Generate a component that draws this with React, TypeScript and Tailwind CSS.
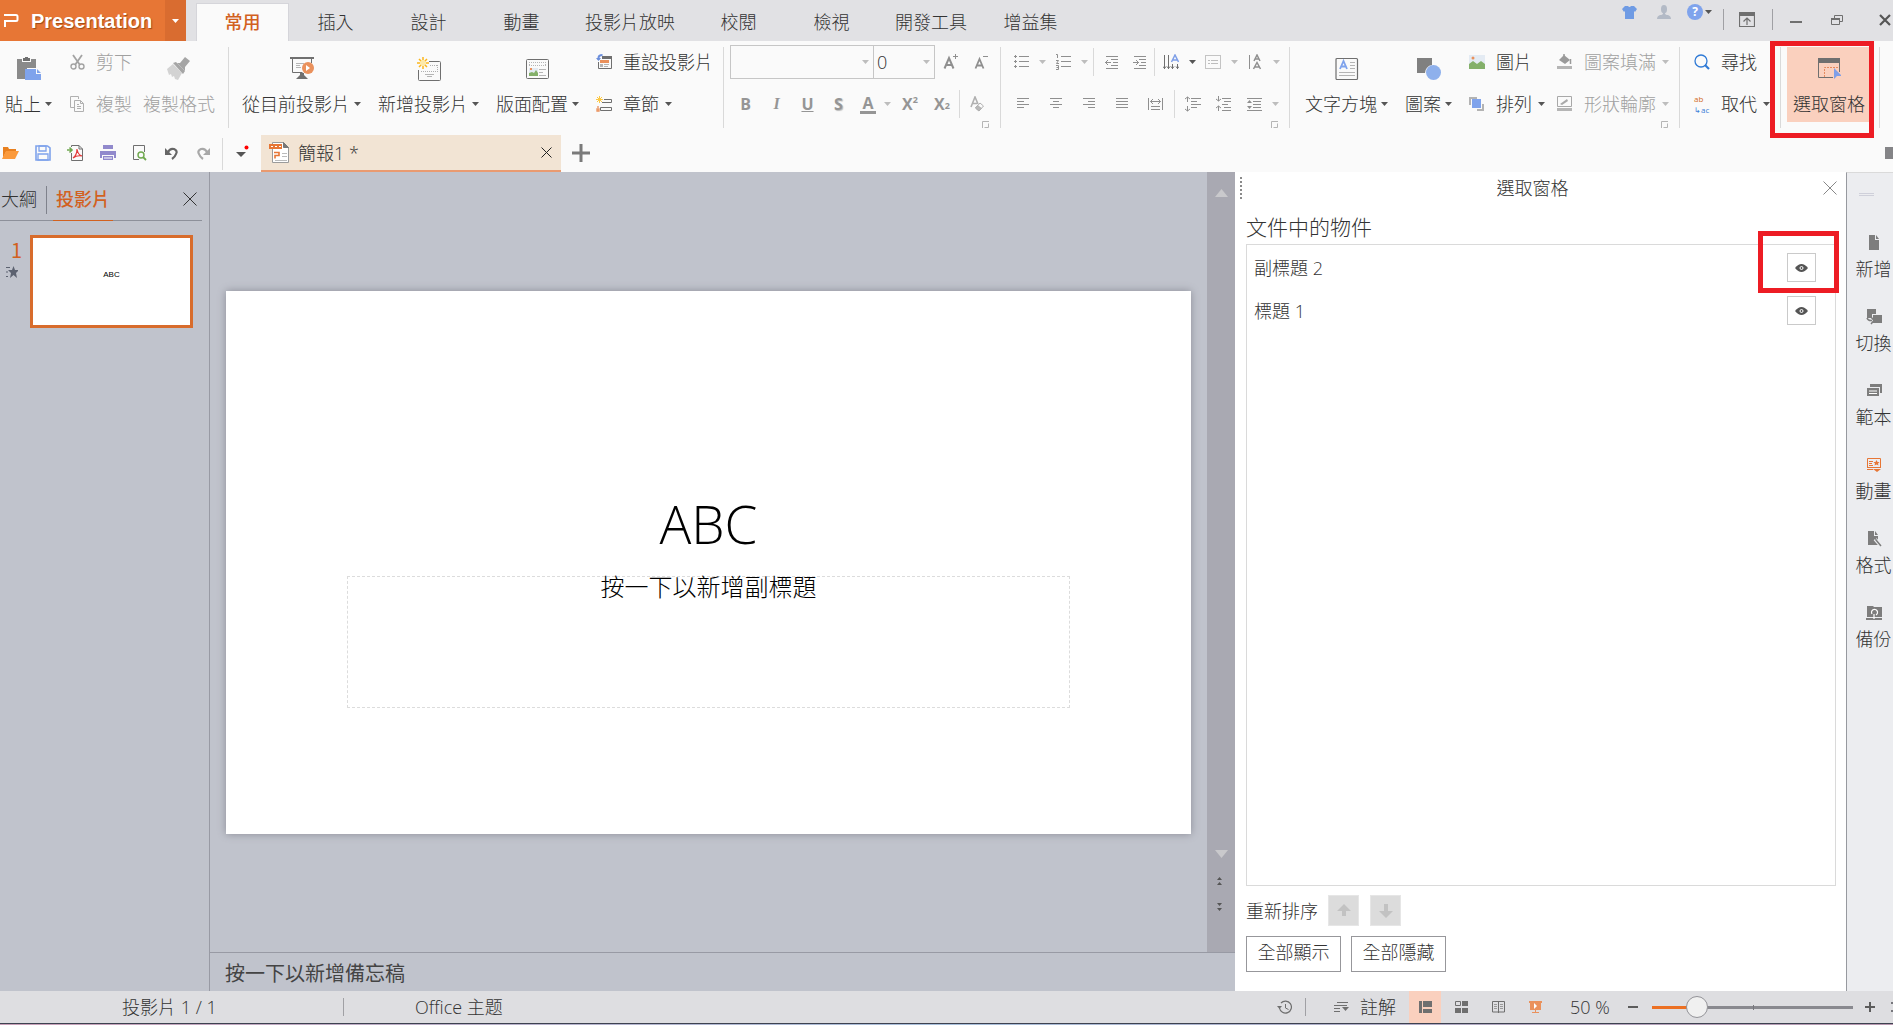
import React from 'react';
import clsx from 'clsx';

interface IconProps {
  w?: number;
  h?: number;
  color?: string;
  className?: string;
  children: React.ReactNode;
}

// Base drawing surface, one unit per pixel
const Icon = ({ w = 16, h = 16, color = '#6f6f6f', className, children }: IconProps) => (
  <svg
    width={w}
    height={h}
    viewBox={`0 0 ${w} ${h}`}
    fill="none"
    stroke={color}
    className={clsx('shrink-0', className)}
    aria-hidden="true"
  >
    {children}
  </svg>
);

const Caret = ({ color = '#555', className }: { color?: string; className?: string }) => (
  <Icon w={7} h={4} className={className}>
    <path d="M0 0h7L3.500 4z" fill={color} stroke="none" />
  </Icon>
);

const LIGHT = '#bdbdbd';
const GREY = '#8f8f8f';

const Divider = ({ className }: { className?: string }) => (
  <span className={clsx('h-7 w-px shrink-0 bg-[#d9d9d9]', className)} />
);

const Launcher = () => (
  <button aria-label="更多選項" className="absolute right-[11px] bottom-0">
    <Icon w={7} h={7} color="#b5b5b5">
      <path d="M.5 7V.5H7M6.500 2.500v4h-4" />
    </Icon>
  </button>
);

/* ---------- ribbon pieces ---------- */

interface RibbonButtonProps {
  icon: React.ReactNode;
  label: string;
  caret?: boolean;
  disabled?: boolean;
}

const BigButton = ({ icon, label, caret, disabled }: RibbonButtonProps) => (
  <button
    className={clsx(
      'flex shrink-0 flex-col items-center gap-2 pt-[10px] whitespace-nowrap',
      disabled ? 'text-[#a0a0a0]' : 'text-[#333]'
    )}
  >
    {icon}
    <span className="flex items-center gap-1 leading-[30px]">
      {label}
      {caret && <Caret />}
    </span>
  </button>
);

const SmallButton = ({ icon, label, caret, disabled }: RibbonButtonProps) => (
  <button
    className={clsx(
      'flex h-[30px] shrink-0 items-center gap-[11px] whitespace-nowrap',
      disabled ? 'text-[#a0a0a0]' : 'text-[#333]'
    )}
  >
    {icon}
    <span className="flex items-center gap-[6px]">
      {label}
      {caret && <Caret color={disabled ? LIGHT : '#555'} />}
    </span>
  </button>
);

const Group = ({ className, children }: { className?: string; children: React.ReactNode }) => (
  <div className={clsx('relative flex shrink-0 border-r border-[#d9d9d9]', className)}>{children}</div>
);

const Cell = ({ label, className, children }: { label: string; className: string; children: React.ReactNode }) => (
  <button aria-label={label} className={clsx('flex h-[30px] shrink-0 items-center justify-center', className)}>
    {children}
  </button>
);

/* ---------- icons ---------- */

const PasteIcon = () => (
  <Icon w={24} h={24}>
    <path d="M0 2h5v3h9V2h5v9h-9v11H0z" fill="#8a8a8a" stroke="none" />
    <path d="M6 4V1h2V0h3v1h2v3z" fill="#6f6f6f" stroke="none" />
    <path d="M8 12h11v5h5v6H8z" fill="#7fa3ec" stroke="none" />
    <path d="M20 12l4 4h-4z" fill="#7fa3ec" stroke="none" />
  </Icon>
);

const CutIcon = () => (
  <Icon w={15} h={16} color="#a3a3a3">
    <path d="M3 1l7 10M12 1L5 11" strokeWidth="1.800" />
    <circle cx="3.500" cy="12.500" r="2.500" strokeWidth="1.400" />
    <circle cx="11.500" cy="12.500" r="2.500" strokeWidth="1.400" />
  </Icon>
);

const CopyIcon = () => (
  <Icon w={15} h={16} color="#b0b0b0">
    <path d="M4 11.500H.5V.5h8V3" />
    <path d="M4.500 4.500h6l3 3v8h-9zM10.500 4.500v3h3M7 8.500h2M7 10.500h4M7 12.500h4" />
  </Icon>
);

const BrushIcon = () => (
  <Icon w={24} h={24}>
    <path d="M0 12l6-5 9 9-4 7-3-1-1-3-2 1-1-3-2 1z" fill="#d3d3d3" stroke="none" />
    <path d="M6 6l3-1 9 9-2 3z" fill="#a5a5a5" stroke="none" />
    <path d="M10 6h3l5-6 5 4-5 6v4z" fill="#a5a5a5" stroke="none" />
  </Icon>
);

const ShowIcon = () => (
  <Icon w={24} h={24}>
    <path d="M0 0h24v2H0z" fill="#707070" stroke="none" />
    <path d="M2.500 2v13.500h10M21.500 2v4" />
    <path d="M6 6.500h8M6 8.500h4M6 10.500h5" stroke="#b5b5b5" />
    <path d="M10 16h4v2l4 4H6l4-4z" fill="#707070" stroke="none" />
    <circle cx="18" cy="11" r="6" fill="#ea915c" stroke="none" />
    <path d="M16 8v6l4-3z" fill="#fff" stroke="none" />
  </Icon>
);

const NewSlideIcon = () => (
  <Icon w={24} h={24}>
    <path d="M12 4.500h10.500q1 0 1 1v17q0 1-1 1h-20q-1 0-1-1V13" />
    <path d="M13 8.500h8M20.500 8v6M4 14.500h17" stroke="#b0b0b0" strokeDasharray="1 1" />
    <path d="M8 17.500h9M10 19.500h5" stroke="#b5b5b5" />
    <circle cx="6" cy="6" r="3" fill="#fde9a8" stroke="none" />
    <path d="M6 0v3M6 9v3M0 6h3M9 6h3M2 2l2 2M8 8l2 2M10 2L8 4M4 8l-2 2" stroke="#fbb61c" strokeWidth="1.500" />
  </Icon>
);

const LayoutIcon = () => (
  <Icon w={24} h={24}>
    <rect x=".5" y="2.500" width="22" height="19" rx="1" />
    <path d="M3 5.500h17M3 8.500h17M3.500 5v4M19.500 5v4" stroke="#b5b5b5" strokeDasharray="1 1" />
    <path d="M3 11h9v8H3z" fill="#e3eaf2" stroke="none" />
    <path d="M3 19v-3l3-1 2 1 2-3 2 3v3z" fill="#84b06a" stroke="none" />
    <path d="M4 11h2v2H4z" fill="#ea915c" stroke="none" />
    <path d="M13 12.500h7M13 15.500h4M13 18.500h7" stroke="#b5b5b5" />
  </Icon>
);

const ResetIcon = () => (
  <Icon w={16} h={16}>
    <path d="M6 2h10v3H6z" fill="#6f6f6f" stroke="none" />
    <path d="M15.500 5v9.500h-13V8" />
    <path d="M4 6h9v3H4z" fill="#ea915c" stroke="none" />
    <path d="M4 10h3v3H4z" fill="#b5b5b5" stroke="none" />
    <path d="M8 10.500h5M8 12.500h4" stroke="#b5b5b5" />
    <path d="M2.500 6V4q0-3 4-3" stroke="#6c8fdc" strokeWidth="2" />
    <path d="M0 4h5L2.500 7z" fill="#6c8fdc" stroke="none" />
  </Icon>
);

const SectionIcon = () => (
  <Icon w={16} h={16}>
    <path d="M8 3.500h7.500v3H6M4.500 11.500h11v3h-11z" />
    <path d="M2 10v2M1 13h2v2H1z" stroke="#ea915c" strokeWidth="1.300" />
    <path d="M3.500 0v7M0 3.500h7M1 1l5 5M6 1L1 6" stroke="#fcc843" />
  </Icon>
);

const TextBoxIcon = () => (
  <Icon w={24} h={24}>
    <rect x="1" y="1.500" width="21.500" height="21" rx="1" strokeWidth="1.200" />
    <path d="M5 12l3.500-8L12 12M6.500 9.500h4" stroke="#7fa3ec" strokeWidth="1.800" />
    <path d="M15 5.500h5M15 8.500h5M15 11.500h5M4 15.500h16M4 18.500h16" stroke="#b5b5b5" />
  </Icon>
);

const ShapesIcon = () => (
  <Icon w={24} h={24}>
    <path d="M0 1h15v7a8 8 0 0 0-7 8H0z" fill="#808080" stroke="none" />
    <circle cx="16.500" cy="15.500" r="7.500" fill="#8eb0ec" stroke="none" />
  </Icon>
);

const PictureIcon = () => (
  <Icon w={16} h={16}>
    <path d="M0 1h16v14H0z" fill="#e4ebf3" stroke="none" />
    <path d="M0 15v-5l4-3 4 3 4-3 4 3v5z" fill="#84b06a" stroke="none" />
    <circle cx="4" cy="4" r="1.500" fill="#ea915c" stroke="none" />
  </Icon>
);

const ArrangeIcon = () => (
  <Icon w={16} h={16}>
    <path d="M0 1h8v2H2v6H0zM8 15v-2h5V8h2v7z" fill="#b3b3b3" stroke="none" />
    <path d="M3 3h9v9H3z" fill="#7fa3ec" stroke="none" />
  </Icon>
);

const FillIcon = () => (
  <Icon w={16} h={16}>
    <path d="M0 12h15v3H0z" fill="#b5b5b5" stroke="none" />
    <path d="M2 6l5-5 6 5-5 4z" fill="#9a9a9a" stroke="none" />
    <path d="M7 0v4M13.500 5v5" stroke="#9a9a9a" strokeWidth="1.500" />
  </Icon>
);

const OutlineIcon = () => (
  <Icon w={16} h={16} color="#a8a8a8">
    <path d="M.5.500h14v10H.5z" />
    <path d="M3 8l7-5 1 2-6 4z" fill="#a8a8a8" stroke="none" />
    <path d="M0 12h15v3H0z" fill="#b5b5b5" stroke="none" />
  </Icon>
);

const SearchIcon = () => (
  <Icon w={16} h={16} color="#2f7ad6">
    <circle cx="7" cy="7" r="6" strokeWidth="1.300" />
    <path d="M11 11l4 4" strokeWidth="2.200" />
  </Icon>
);

const ReplaceIcon = () => (
  <span className="flex w-4 shrink-0 flex-col items-start text-[8px] leading-[11px] font-normal">
    <span className="text-[#d2691e]">ab</span>
    <span className="text-[#3b7dd8]">↳ac</span>
  </span>
);

const SelectPaneIcon = () => (
  <Icon w={24} h={24}>
    <path d="M1 1h22v5H1z" fill="#6f6f6f" stroke="none" />
    <path d="M1.500 6v14.500H16M22.500 6v9" />
    <path d="M7.500 20V10.500H22" stroke="#e58a5e" strokeDasharray="2 1" />
    <path d="M17 11l8 8h-5l-3 3z" fill="#7f9fe8" stroke="none" />
  </Icon>
);

// Rows of horizontal strokes: [x1, x2] for every line
const Lines = ({ rows, step = 3, w = 15, color = GREY, children }: {
  rows: [number, number][];
  step?: number;
  w?: number;
  color?: string;
  children?: React.ReactNode;
}) => (
  <Icon w={w} h={16} color={color}>
    {rows.map(([a, b], i) => (
      <path key={i} d={`M${a} ${2.5 + i * step}H${b}`} />
    ))}
    {children}
  </Icon>
);

/* ---------- page sections ---------- */

const menuTabs = ['常用', '插入', '設計', '動畫', '投影片放映', '校閱', '檢視', '開發工具', '增益集'];

const TitleBar = () => (
  <header className="flex h-[41px] shrink-0 overflow-hidden bg-[#e1e1e4]">
    <button className="flex h-full w-[165px] shrink-0 items-center gap-3 bg-[#e77635] pl-1 font-['Liberation_Sans'] text-xl font-bold text-white [text-shadow:1px_1px_1px_#9a4a18]">
      <Icon w={15} h={14} color="#fff">
        <path d="M0 1h12q1.500 0 1.500 1.500v3q0 1.500-1.500 1.500H1v6" strokeWidth="2" />
      </Icon>
      Presentation
    </button>
    <button aria-label="應用程式選單" className="flex h-full w-[21px] shrink-0 items-center justify-center bg-[#d96c30]">
      <Caret color="#fff" />
    </button>
    <nav className="ml-[10px] flex items-stretch">
      {menuTabs.map((tab, i) => (
        <button
          key={tab}
          className={clsx(
            'min-w-[93px] px-[17px] whitespace-nowrap',
            i === 0
              ? 'mt-[3px] border border-b-0 border-[#d5d5da] bg-[#fafafa] pb-[2px] font-medium text-[#d2611f]'
              : 'pt-[2px] text-[#333]'
          )}
        >
          {tab}
        </button>
      ))}
    </nav>
    <div className="ml-auto flex shrink-0 items-start pr-[2px]">
      <button aria-label="外觀" className="mt-[5px] mr-5">
        <Icon w={15} h={15}>
          <path d="M3 1h3q1.500 2 3 0h3l3 3-2 3-1-1v8H3V6L2 7 0 4z" fill="#6f9be4" stroke="none" />
        </Icon>
      </button>
      <button aria-label="帳戶" className="mt-[5px] mr-4">
        <Icon w={14} h={14}>
          <path d="M4 4q0-4 3-4t3 4-2 4q0 2 3 2 3 1 3 4H0q0-3 3-4 3 0 3-2Q4 8 4 4z" fill="#b3bac6" stroke="none" />
        </Icon>
      </button>
      <button aria-label="說明" className="mt-1 mr-[11px] flex items-center gap-[2px]">
        <span className="flex size-4 items-center justify-center rounded-full bg-[#7fa3ec] text-xs font-bold text-white">?</span>
        <Caret />
      </button>
      <span className="mt-[9px] h-[21px] w-px bg-[#a0a0a4]" />
      <button aria-label="隱藏功能區" className="mt-3 ml-[15px]">
        <Icon w={16} h={16}>
          <path d="M.5.500h15v14H.5zM8 13V6M4.500 9.500L8 6l3.500 3.500" strokeWidth="1.200" />
          <path d="M0 0h16v4H0z" fill="#6f6f6f" stroke="none" />
        </Icon>
      </button>
      <span className="mt-[9px] ml-[17px] h-[21px] w-px bg-[#a0a0a4]" />
      <button aria-label="最小化" className="mt-[14px] ml-[17px]">
        <Icon w={13} h={16}>
          <path d="M0 8h12" strokeWidth="2" />
        </Icon>
      </button>
      <button aria-label="還原" className="mt-[14px] ml-7">
        <Icon w={13} h={13}>
          <path d="M.5 4.500h8v6h-8zM3.500 4V1.500h8v6H9" />
          <path d="M0 4h9v2H0z" fill="#6f6f6f" stroke="none" />
        </Icon>
      </button>
      <button aria-label="關閉" className="mt-[14px] ml-[35px]">
        <Icon w={12} h={12} color="#555">
          <path d="M1 1l10 10M11 1L1 11" strokeWidth="2.200" />
        </Icon>
      </button>
    </div>
  </header>
);

const FontGroup = () => (
  <Group className="flex-col gap-3 pr-[5px] pl-[6px]">
    <div className="flex h-[30px] items-center">
      <div className="flex h-[34px] border border-[#c6c6c6] bg-[#fafafa]">
        <label className="relative flex items-center border-r border-[#c6c6c6]">
          <select aria-label="字型" className="w-[142px] appearance-none px-1 outline-none">
            <option></option>
          </select>
          <Caret color={LIGHT} className="absolute right-1" />
        </label>
        <label className="relative flex items-center">
          <select aria-label="字型大小" className="w-[60px] appearance-none pl-[3px] text-[#333] outline-none">
            <option>0</option>
          </select>
          <Caret color={LIGHT} className="absolute right-1" />
        </label>
      </div>
      <Cell label="放大字型" className="w-[32px]">
        <Icon w={16} h={16}>
          <path d="M1.500 14.500L6 4l4.500 10.500M3 11h6" stroke={GREY} strokeWidth="2" />
          <path d="M10 2.500h5M12.500 0v5" stroke={GREY} />
        </Icon>
      </Cell>
      <Cell label="縮小字型" className="w-[28px]">
        <Icon w={15} h={16}>
          <path d="M1.500 14.500L5.500 5l4 9.500M3 11.500h5" stroke={GREY} strokeWidth="1.800" />
          <path d="M9 2.500h5" stroke={GREY} />
        </Icon>
      </Cell>
    </div>
    <div className="flex h-[30px] items-center text-base font-bold text-[#959595]">
      <Cell label="粗體" className="w-[31px]">B</Cell>
      <Cell label="斜體" className="w-[31px] font-['Liberation_Serif'] italic">I</Cell>
      <Cell label="底線" className="w-[31px] underline">U</Cell>
      <Cell label="陰影" className="w-[31px] [text-shadow:1px_1px_1px_#bbb]">S</Cell>
      <Cell label="字型色彩" className="w-7">
        <span className="border-b-[3px] border-[#959595] px-[2px] leading-4">A</span>
      </Cell>
      <Cell label="選擇色彩" className="w-[10px]"><Caret color={LIGHT} /></Cell>
      <Cell label="上標" className="w-9">X<sup className="text-[9px]">2</sup></Cell>
      <Cell label="下標" className="w-7">X<sub className="text-[9px]">2</sub></Cell>
      <Divider className="ml-[3px]" />
      <Cell label="清除格式" className="w-[34px]">
        <Icon w={14} h={16} color="#b0b0b0">
          <path d="M1 11L5 1l3 7M2.500 7.500H7" strokeWidth="1.600" />
          <path d="M5.500 12l4.500-5 3.500 3-4.500 5z" />
          <path d="M5.500 12l2-2.500 4 3-2.500 2.500z" fill="#b8b8b8" />
        </Icon>
      </Cell>
    </div>
    <Launcher />
  </Group>
);

const ParagraphGroup = () => (
  <Group className="flex-col gap-3 pr-2 pl-1">
    <div className="flex h-[30px] items-center">
      <Cell label="項目符號" className="w-8">
        <Lines rows={[[5, 15], [5, 15], [5, 15]]} step={5}>
          <path d="M0 2.500h3M1.500 1v3M0 7.500h3M1.500 6v3M0 12.500h3M1.500 11v3" />
        </Lines>
      </Cell>
      <Cell label="項目符號選項" className="w-[10px]"><Caret color={LIGHT} /></Cell>
      <Cell label="編號" className="w-8">
        <Lines rows={[[5, 15], [5, 15], [5, 15]]} step={5}>
          <path d="M0 .5h1.500V4M0 6.500h2.500L.5 9.500H3M0 11.500h2.500v4H0M.5 13.500h2" />
        </Lines>
      </Cell>
      <Cell label="編號選項" className="w-[10px]"><Caret color={LIGHT} /></Cell>
      <Divider className="mx-1" />
      <Cell label="減少縮排" className="w-7">
        <Lines rows={[[1, 13], [6, 13], [8, 13], [6, 13], [1, 13]]} w={14}>
          <path d="M0 8.500h6M3 6L.5 8.500 3 11" />
        </Lines>
      </Cell>
      <Cell label="增加縮排" className="w-7">
        <Lines rows={[[1, 13], [6, 13], [8, 13], [6, 13], [1, 13]]} w={14}>
          <path d="M0 8.500h6M3 6l2.500 2.500L3 11" />
        </Lines>
      </Cell>
      <Divider />
      <Cell label="文字方向" className="w-8">
        <Icon w={16} h={16} color="#6f6f6f">
          <path d="M1.500 1v14M5.500 1v14M9.500 10v5M14.500 10v5M0 12.500l1.500 2 1.500-2M4 12.500l1.500 2 1.500-2M8 12.500l1.500 2 1.500-2M13 12.500l1.500 2 1.500-2" />
          <path d="M8.500 8L12 1l3.500 7M9.500 6h5" stroke="#7f9fe8" strokeWidth="1.500" />
        </Icon>
      </Cell>
      <Cell label="文字方向選項" className="w-[10px]"><Caret /></Cell>
      <Cell label="對齊文字" className="w-8">
        <Icon w={16} h={14} color={GREY}>
          <path d="M.5.500h15v13H.5z" strokeDasharray="1 1" />
          <path d="M3 5.500h2M6 5.500h7M3 8.500h2M6 8.500h7" stroke={LIGHT} />
        </Icon>
      </Cell>
      <Cell label="對齊文字選項" className="w-[10px]"><Caret color={LIGHT} /></Cell>
      <Cell label="直書文字" className="w-8">
        <Icon w={14} h={16} color={GREY}>
          <path d="M1.500 1v14" />
          <path d="M6 7l3-6 3 6M7 5h4M5.500 15L9 8.500l3.500 6.500M6.500 13h5" strokeWidth="1.500" />
        </Icon>
      </Cell>
      <Cell label="直書文字選項" className="w-[10px]"><Caret color={LIGHT} /></Cell>
    </div>
    <div className="flex h-[30px] items-center pl-[2px]">
      <Cell label="靠左對齊" className="w-[33px]"><Lines w={13} rows={[[0, 12], [0, 7], [0, 12], [0, 7]]} /></Cell>
      <Cell label="置中" className="w-[33px]"><Lines w={13} rows={[[0, 12], [3, 9], [0, 12], [3, 9]]} /></Cell>
      <Cell label="靠右對齊" className="w-[33px]"><Lines w={13} rows={[[0, 12], [5, 12], [0, 12], [5, 12]]} /></Cell>
      <Cell label="左右對齊" className="w-[33px]"><Lines w={13} rows={[[0, 12], [0, 12], [0, 12], [0, 12]]} /></Cell>
      <Cell label="分散對齊" className="w-[33px]">
        <Icon w={15} h={14} color={GREY}>
          <path d="M.5 1v12M14.500 1v12M3 9.500h9M3 12.500h9M2.500 4.500h10M5 2L2.500 4.500 5 7M10 2l2.500 2.500L10 7" />
        </Icon>
      </Cell>
      <Divider className="mx-[2px]" />
      <Cell label="行距" className="w-[31px]">
        <Lines w={16} rows={[[6, 16], [6, 12], [6, 16], [6, 12]]}>
          <path d="M2.500 1v5M0 3l2.500-2L5 3M2.500 10v5M0 13l2.500 2L5 13" />
        </Lines>
      </Cell>
      <Cell label="段落間距" className="w-[31px]">
        <Lines w={16} rows={[[6, 15], [8, 15], [6, 12], [8, 15], [6, 15]]}>
          <path d="M2.500 0v5M0 3l2.500 2L5 3M2.500 10v5M0 12l2.500-2L5 12" />
        </Lines>
      </Cell>
      <Cell label="縮排" className="w-[31px]">
        <Lines w={15} rows={[[0, 15], [6, 14], [6, 14], [6, 14], [0, 15]]}>
          <path d="M0 7l2.500-3L5 7zM0 10l2.500 3L5 10z" fill={GREY} stroke="none" />
        </Lines>
      </Cell>
      <Cell label="縮排選項" className="w-[10px]"><Caret color={LIGHT} /></Cell>
    </div>
    <Launcher />
  </Group>
);

const Ribbon = () => (
  <section className="flex h-[94px] shrink-0 bg-[#fafafa] pt-[6px] pb-[7px]">
    <Group className="w-[229px] pl-[5px]">
      <BigButton icon={<PasteIcon />} label="貼上" caret />
      <div className="mr-[11px] ml-[18px] flex flex-col gap-3">
        <SmallButton icon={<CutIcon />} label="剪下" disabled />
        <SmallButton icon={<CopyIcon />} label="複製" disabled />
      </div>
      <BigButton icon={<BrushIcon />} label="複製格式" disabled />
    </Group>

    <Group className="gap-[17px] pr-[10px] pl-[13px]">
      <BigButton icon={<ShowIcon />} label="從目前投影片" caret />
      <BigButton icon={<NewSlideIcon />} label="新增投影片" caret />
      <BigButton icon={<LayoutIcon />} label="版面配置" caret />
      <div className="flex flex-col gap-3">
        <SmallButton icon={<ResetIcon />} label="重設投影片" />
        <SmallButton icon={<SectionIcon />} label="章節" caret />
      </div>
    </Group>

    <FontGroup />
    <ParagraphGroup />

    <Group className="gap-[17px] pr-[10px] pl-[15px]">
      <BigButton icon={<TextBoxIcon />} label="文字方塊" caret />
      <BigButton icon={<ShapesIcon />} label="圖案" caret />
      <div className="flex gap-3">
        <div className="flex flex-col gap-3">
          <SmallButton icon={<PictureIcon />} label="圖片" />
          <SmallButton icon={<ArrangeIcon />} label="排列" caret />
        </div>
        <div className="flex flex-col gap-3">
          <SmallButton icon={<FillIcon />} label="圖案填滿" caret disabled />
          <SmallButton icon={<OutlineIcon />} label="形狀輪廓" caret disabled />
        </div>
      </div>
      <Launcher />
    </Group>

    <Group className="flex-col gap-3 pr-[10px] pl-[14px]">
      <SmallButton icon={<SearchIcon />} label="尋找" />
      <SmallButton icon={<ReplaceIcon />} label="取代" caret />
    </Group>

    <Group className="pr-2 pl-[6px]">
      <button className="flex h-[75px] w-[84px] flex-col items-center gap-2 bg-[#fad0be] pt-[10px] leading-[30px] whitespace-nowrap text-[#333]">
        <SelectPaneIcon />
        選取窗格
      </button>
      <span className="pointer-events-none absolute -top-[6px] -left-[11px] z-10 h-[97px] w-[104px] border-[5px] border-[#ed1c24]" />
    </Group>
  </section>
);

const QuickBar = () => (
  <section className="flex h-[37px] shrink-0 items-center bg-[#fafafa]">
    <div className="flex items-center gap-4 pb-[2px] pl-[2px]">
      <button aria-label="開啟">
        <Icon w={17} h={14}>
          <path d="M1 12V1h5l1 2h7v3H4z" fill="#e8801f" stroke="none" />
          <path d="M4 5h13l-4 8H0z" fill="#fb9a3c" stroke="none" />
        </Icon>
      </button>
      <button aria-label="儲存">
        <Icon w={16} h={16} color="#7fa3ec">
          <path d="M1 1h11.500L15 3v12H1z" strokeWidth="1.600" />
          <path d="M4 1h7v5H4zM3 9h10v6H3z" strokeWidth="1.300" />
        </Icon>
      </button>
      <button aria-label="匯出 PDF">
        <Icon w={17} h={16}>
          <path d="M4.500 8v7.500h11V4L12 .5H4.500V2M12 .5V4h3.500" />
          <path d="M0 5h4M2.500 2.500L5 5 2.500 7.500" stroke="#6fa84f" strokeWidth="1.600" />
          <path d="M6 13q4-3 4-9 1 6 5 7-5-1-9 2z" stroke="#e33b3b" strokeWidth="1.200" />
        </Icon>
      </button>
      <button aria-label="列印">
        <Icon w={16} h={16}>
          <path d="M3 0h10v4H3zM0 6h16v7h-2v-3H2v3H0z" fill="#9189cc" stroke="none" />
          <path d="M3 11h10v4H3z" fill="#9189cc" stroke="none" />
          <path d="M4 13h8" stroke="#fff" />
        </Icon>
      </button>
      <button aria-label="預覽列印">
        <Icon w={15} h={16}>
          <path d="M7 14.500H1.500V.5h11V7" />
          <circle cx="9" cy="10" r="3" stroke="#6fa84f" strokeWidth="1.400" />
          <path d="M11 12l3 3" stroke="#6fa84f" strokeWidth="1.800" />
        </Icon>
      </button>
      <button aria-label="復原" className="ml-[2px]">
        <Icon w={14} h={14} color="#666">
          <path d="M3 6q2-4 6-3 4 2 2 5-1 3-4 5" strokeWidth="2.200" />
          <path d="M0 2v7h7z" fill="#666" stroke="none" />
        </Icon>
      </button>
      <button aria-label="重做" className="ml-[2px]">
        <Icon w={14} h={14} color="#a8a8a8">
          <path d="M10 6Q8 2 4 3q-4 2-2 5 1 3 4 5" strokeWidth="2.200" />
          <path d="M13 2v7H6z" fill="#a8a8a8" stroke="none" />
        </Icon>
      </button>
    </div>
    <span className="ml-[11px] h-8 w-px bg-[#d9d9d9]" />
    <button aria-label="自訂快速存取" className="mr-[12px] ml-[13px] pb-1">
      <Icon w={13} h={14}>
        <path d="M0 7h10l-5 5z" fill="#555" stroke="none" />
        <circle cx="10.500" cy="2.500" r="2" fill="#f00" stroke="none" />
      </Icon>
    </button>
    <div className="flex h-full w-[300px] items-center border-b-2 border-[#e99a70] bg-[#f2e4d4] pr-[9px] pl-2">
      <Icon w={21} h={23}>
        <path d="M3.500 1.500h11l5 5v15h-16z" fill="#fff" stroke="#9b9b9b" />
        <path d="M14.500 1.500v5h5z" fill="#777" stroke="#777" />
        <path d="M0 3h13v5H0z" fill="#e77635" stroke="none" />
        <path d="M2 5.500h2M6 5.500h2M10 5.500h2" stroke="#fff" />
        <path d="M5 11.500h5v3H6v3" stroke="#e77635" strokeWidth="1.600" />
        <path d="M13 12.500h5M13 15.500h5M6 19.500h12" stroke="#bbb" />
      </Icon>
      <span className="ml-2 text-[#333]">簡報1 *</span>
      <button aria-label="關閉文件" className="ml-auto">
        <Icon w={11} h={11} color="#222">
          <path d="M.5.500l10 10M10.500.500l-10 10" />
        </Icon>
      </button>
    </div>
    <button aria-label="新增文件" className="ml-[11px] pb-[2px]">
      <Icon w={18} h={18} color="#7a7a7a">
        <path d="M0 9h18M9 0v18" strokeWidth="3" />
      </Icon>
    </button>
    <span className="mb-[2px] ml-auto h-3 w-2 bg-[#848487]" />
  </section>
);

const SlidePanel = () => (
  <aside className="flex w-[210px] shrink-0 flex-col border-r border-[#989aa4]">
    <div className="mr-[7px] flex h-[49px] items-stretch border-b border-[#8d909a] pt-[5px]">
      <button className="pl-px text-[#333]">大綱</button>
      <span className="mt-[9px] ml-[9px] h-7 w-px bg-[#7f828c]" />
      <button className="-mb-px ml-[6px] border-b border-[#d2611f] px-[3px] font-medium text-[#d2611f]">投影片</button>
      <button aria-label="關閉面板" className="mr-[5px] ml-auto">
        <Icon w={14} h={14} color="#333">
          <path d="M.5.500l13 13M13.500.500l-13 13" />
        </Icon>
      </button>
    </div>
    <div className="flex gap-2 pt-[14px] pl-[6px]">
      <div className="flex w-4 flex-col items-end gap-1 pt-[3px]">
        <span className="font-['Noto_Sans_CJK_TC'] text-xl leading-6 font-normal text-[#d2611f]">1</span>
        <Icon w={12} h={12} className="mr-1">
          <path d="M7.500 0l1.500 4h4L10 7l1 5-3.500-3L4 12l1-5-3-3h4z" fill="#5c6270" stroke="none" />
          <path d="M0 1.500h4M0 6h2M0 10.500h2" stroke="#5c6270" />
        </Icon>
      </div>
      <button className="flex h-[93px] w-[163px] items-start justify-center border-[3px] border-[#d86c2c] bg-white pt-[29px] font-['Liberation_Sans'] text-[8px] leading-4 font-normal text-black">
        ABC
      </button>
    </div>
  </aside>
);

const SlideCanvas = () => (
  <main className="flex min-w-0 flex-1 flex-col">
    <div className="flex min-h-0 flex-1">
      <div className="flex min-w-0 flex-1 items-center px-4">
        <div className="flex aspect-[965/543] w-full flex-col items-center bg-white text-black shadow-[0_0_8px_#8a8c96]">
          <h1 className="flex h-[285px] items-end pb-4 font-['Open_Sans'] text-[53px] leading-[72px] font-light">ABC</h1>
          <div className="h-[132px] w-3/4 border border-dashed border-[#dcdcdc] text-center text-2xl leading-5">
            按一下以新增副標題
          </div>
        </div>
      </div>
      <div className="flex w-7 shrink-0 flex-col items-center bg-[#a9a9b2] pt-[17px] pb-10">
        <button aria-label="向上捲動" className="flex">
          <Icon w={13} h={8}><path d="M0 8h13L6.500 0z" fill="#c9c9cc" stroke="none" /></Icon>
        </button>
        <button aria-label="向下捲動" className="mt-auto flex">
          <Icon w={13} h={8}><path d="M0 0h13L6.500 8z" fill="#c9c9cc" stroke="none" /></Icon>
        </button>
        <button aria-label="上一張投影片" className="mt-[18px] mr-1 flex">
          <Icon w={5} h={9}><path d="M0 4h5L2.500 1zM0 9h5L2.500 6z" fill="#555" stroke="none" /></Icon>
        </button>
        <button aria-label="下一張投影片" className="mt-[18px] mr-1 flex">
          <Icon w={5} h={9}><path d="M0 0h5L2.500 3zM0 5h5L2.500 8z" fill="#555" stroke="none" /></Icon>
        </button>
      </div>
    </div>
    <div className="h-[39px] border-t border-[#989aa4] pl-[15px] text-xl leading-[42px] font-normal text-[#444]">按一下以新增備忘稿</div>
  </main>
);

const objects = ['副標題 2', '標題 1'];

const SelectionPane = () => (
  <aside className="flex w-[611px] shrink-0 flex-col bg-white text-[#333]">
    <div className="flex h-8 items-center pr-[9px] pl-[5px]">
      <span className="h-[22px] border-l-2 border-dotted border-[#8a8a8a]" />
      <h2 className="flex-1 text-center">選取窗格</h2>
      <button aria-label="關閉窗格">
        <Icon w={14} h={14} color="#888">
          <path d="M.5.500l13 13M13.500.500l-13 13" />
        </Icon>
      </button>
    </div>
    <h3 className="pt-[6px] pl-[11px] text-[21px] leading-[34px]">文件中的物件</h3>
    <ul className="mr-[10px] ml-[11px] min-h-0 flex-1 border border-[#dadada] pt-px">
      {objects.map((name, i) => (
        <li key={name} className="relative flex h-[43px] items-center justify-between pr-[19px] pl-[7px]">
          {name}
          <button aria-label={`顯示或隱藏 ${name}`} className="flex size-[29px] items-center justify-center border border-[#cacaca]">
            <Icon w={13} h={8}>
              <path d="M0 4q6.500-8 13 0-6.500 8-13 0z" fill="#555" stroke="none" />
              <circle cx="6.500" cy="4" r="1.500" stroke="#fff" />
            </Icon>
          </button>
          {i === 0 && (
            <span className="pointer-events-none absolute -top-[15px] -right-1 h-[62px] w-[81px] border-[5px] border-[#ed1c24]" />
          )}
        </li>
      ))}
    </ul>
    <div className="flex items-center pt-[9px] pl-[11px]">
      重新排序
      <button aria-label="上移" disabled className="ml-[10px] flex size-[31px] items-center justify-center border border-[#e6e6e6] bg-[#dcdcdc]">
        <Icon w={14} h={14}><path d="M7 0l7 7H9v5H5V7H0z" fill="#c2c2c2" stroke="none" /></Icon>
      </button>
      <button aria-label="下移" disabled className="ml-[11px] flex size-[31px] items-center justify-center border border-[#e6e6e6] bg-[#dcdcdc]">
        <Icon w={14} h={14}><path d="M7 14l7-7H9V0H5v7H0z" fill="#c2c2c2" stroke="none" /></Icon>
      </button>
    </div>
    <div className="flex gap-[10px] pt-[10px] pb-[19px] pl-[11px]">
      <button className="h-9 w-[95px] border border-[#97979b] pb-1 whitespace-nowrap">全部顯示</button>
      <button className="h-9 w-[95px] border border-[#97979b] pb-1 whitespace-nowrap">全部隱藏</button>
    </div>
  </aside>
);

const sideTools: { label: string; icon: React.ReactNode }[] = [
  {
    label: '新增',
    icon: <path d="M3 0h6v5h4v10H3zM10 0l3 4h-3z" fill="#7d7d7d" stroke="none" />,
  },
  {
    label: '切換',
    icon: (
      <>
        <path d="M1 0h9v5H6v4H1zM7 6h9v8H7z" fill="#7d7d7d" stroke="none" />
        <path d="M1 9q1 3 5 2.500M5 8l3 3.500L5 15" stroke="#7d7d7d" strokeWidth="1.500" />
      </>
    ),
  },
  {
    label: '範本',
    icon: (
      <>
        <path d="M4 1h12v9h-2V4H4zM1 5h12v8H1z" fill="#7d7d7d" stroke="none" />
        <path d="M3 8h8M3 10.500h8" stroke="#fff" />
      </>
    ),
  },
  {
    label: '動畫',
    icon: (
      <>
        <path d="M1.500 11V1.500h13V11M1 10.500h14M1 12.500h6" stroke="#e77635" />
        <path d="M3 4.500h4M3 6.500h3M3 8.500h4" stroke="#e77635" />
        <path d="M10.500 3l1 2h2l-1.500 1.500.5 2-2-1-2 1 .5-2L7.500 5h2zM7 12h8l-4 3z" fill="#e77635" stroke="none" />
      </>
    ),
  },
  {
    label: '格式',
    icon: (
      <>
        <path d="M2 0h6v5h4v9H2zM9 0l3 4H9z" fill="#7d7d7d" stroke="none" />
        <path d="M9 8l6 7" stroke="#ecedf0" strokeWidth="3.500" />
        <path d="M7 7q3-1 3 2l5 6" stroke="#7d7d7d" strokeWidth="1.500" />
      </>
    ),
  },
  {
    label: '備份',
    icon: (
      <>
        <path d="M1 1h6l1 1h8v10H1zM0 13h16v2H0z" fill="#7d7d7d" stroke="none" />
        <path d="M6 9a3 3 0 1 1 4 1M8 9v5" stroke="#fff" strokeWidth="1.200" />
      </>
    ),
  },
];

const SideBar = () => (
  <aside className="flex w-[47px] shrink-0 flex-col border-t border-l border-t-[#dadada] border-l-[#97999f] bg-[#ecedf0] pl-[7px]">
    <span className="mt-5 mb-[39px] ml-[5px] h-[3px] w-[15px] border-y border-[#cfd0da]" />
    {sideTools.map(({ label, icon }) => (
      <button key={label} className="flex h-[74px] w-full flex-col items-center whitespace-nowrap text-[#333]">
        <Icon w={16} h={16}>{icon}</Icon>
        <span className="leading-9">{label}</span>
      </button>
    ))}
  </aside>
);

const StatusBar = () => (
  <footer className="flex h-8 shrink-0 items-center overflow-hidden bg-[#dedee1] whitespace-nowrap text-[#333]">
    <span className="w-[343px] pl-[122px]">投影片 1 / 1</span>
    <span className="h-[18px] w-px bg-[#a0a0a4]" />
    <span className="pl-[71px]">Office 主题</span>
    <div className="ml-auto flex h-full items-center">
      <button aria-label="歷程記錄">
        <Icon w={15} h={14}>
          <path d="M2.500 8A6 6 0 1 0 4 3" strokeWidth="1.200" />
          <path d="M0 6h5L2.500 9z" fill="#6f6f6f" stroke="none" />
          <path d="M8.500 4v4l3 1.500" />
        </Icon>
      </button>
      <span className="ml-[13px] h-[18px] w-px bg-[#a0a0a4]" />
      <button className="ml-[28px] flex items-center gap-[11px]">
        <Icon w={15} h={12}>
          <path d="M3 1.500h11M0 4.500h13M0 7.500h6M0 10.500h6" />
          <path d="M8 6h7l-3.500 4z" fill="#6f6f6f" stroke="none" />
        </Icon>
        註解
      </button>
      <button aria-label="標準模式" className="ml-[13px] flex h-full w-8 items-center justify-center bg-[#fad0be]">
        <Icon w={13} h={12}>
          <path d="M0 0h3v12H0zM4 0h9v6H4zM4 8h9v4H4z" fill="#6f6f6f" stroke="none" />
        </Icon>
      </button>
      <button aria-label="投影片瀏覽" className="ml-[14px]">
        <Icon w={13} h={12}>
          <path d="M.5.500h5v4h-5z" />
          <path d="M7 0h6v5H7zM0 7h6v5H0zM7 7h6v5H7z" fill="#6f6f6f" stroke="none" />
        </Icon>
      </button>
      <button aria-label="閱讀模式" className="ml-6">
        <Icon w={13} h={12}>
          <path d="M.5.500h12v10.500H.5zM6.500 0v12" />
          <path d="M2 3.500h3M2 5.500h3M2 7.500h3M8 3.500h3M8 5.500h3M8 7.500h3" stroke="#999" />
        </Icon>
      </button>
      <button aria-label="播放" className="ml-6">
        <Icon w={13} h={13}>
          <path d="M0 0h13v2h-1v7H7v2h3v1H3v-1h3V9H1V2H0z" fill="#ea915c" stroke="none" />
          <path d="M5 2v6l3-3z" fill="#fff" stroke="none" />
        </Icon>
      </button>
      <span className="ml-7 w-[41px]">50 %</span>
      <button aria-label="縮小" className="ml-[17px]">
        <Icon w={10} h={10} color="#5c5c5c"><path d="M0 5h10" strokeWidth="2" /></Icon>
      </button>
      <label className="relative ml-[14px] flex items-center">
        <span className="absolute left-1/2 h-[5px] w-px bg-[#77777c]" />
        <input
          type="range"
          aria-label="縮放比例"
          defaultValue={19}
          className="h-[3px] w-[201px] appearance-none bg-linear-to-r from-[#ec7023] from-22% to-[#89898f] to-22% [&::-webkit-slider-thumb]:size-[22px] [&::-webkit-slider-thumb]:appearance-none [&::-webkit-slider-thumb]:rounded-full [&::-webkit-slider-thumb]:border [&::-webkit-slider-thumb]:border-[#939398] [&::-webkit-slider-thumb]:bg-[#f0f0f0]"
        />
      </label>
      <button aria-label="放大" className="ml-3">
        <Icon w={10} h={10} color="#5c5c5c"><path d="M0 5h10M5 0v10" strokeWidth="2" /></Icon>
      </button>
      <span className="ml-4 h-[10px] w-[2px] border-y-2 border-[#77777c]" />
    </div>
  </footer>
);

export default function App() {
  return (
    <div className="flex h-screen flex-col overflow-hidden bg-[#c0c3cc] font-['Open_Sans','Noto_Sans_CJK_TC',sans-serif] text-lg leading-6 font-light">
      <TitleBar />
      <Ribbon />
      <QuickBar />
      <div className="flex min-h-0 flex-1">
        <SlidePanel />
        <SlideCanvas />
        <SelectionPane />
        <SideBar />
      </div>
      <StatusBar />
      <div className="h-[2px] shrink-0 border-t border-[#3d4250] bg-linear-to-r from-[#c9a0b8] via-[#a8c0dc] to-[#b898b0]" />
    </div>
  );
}
